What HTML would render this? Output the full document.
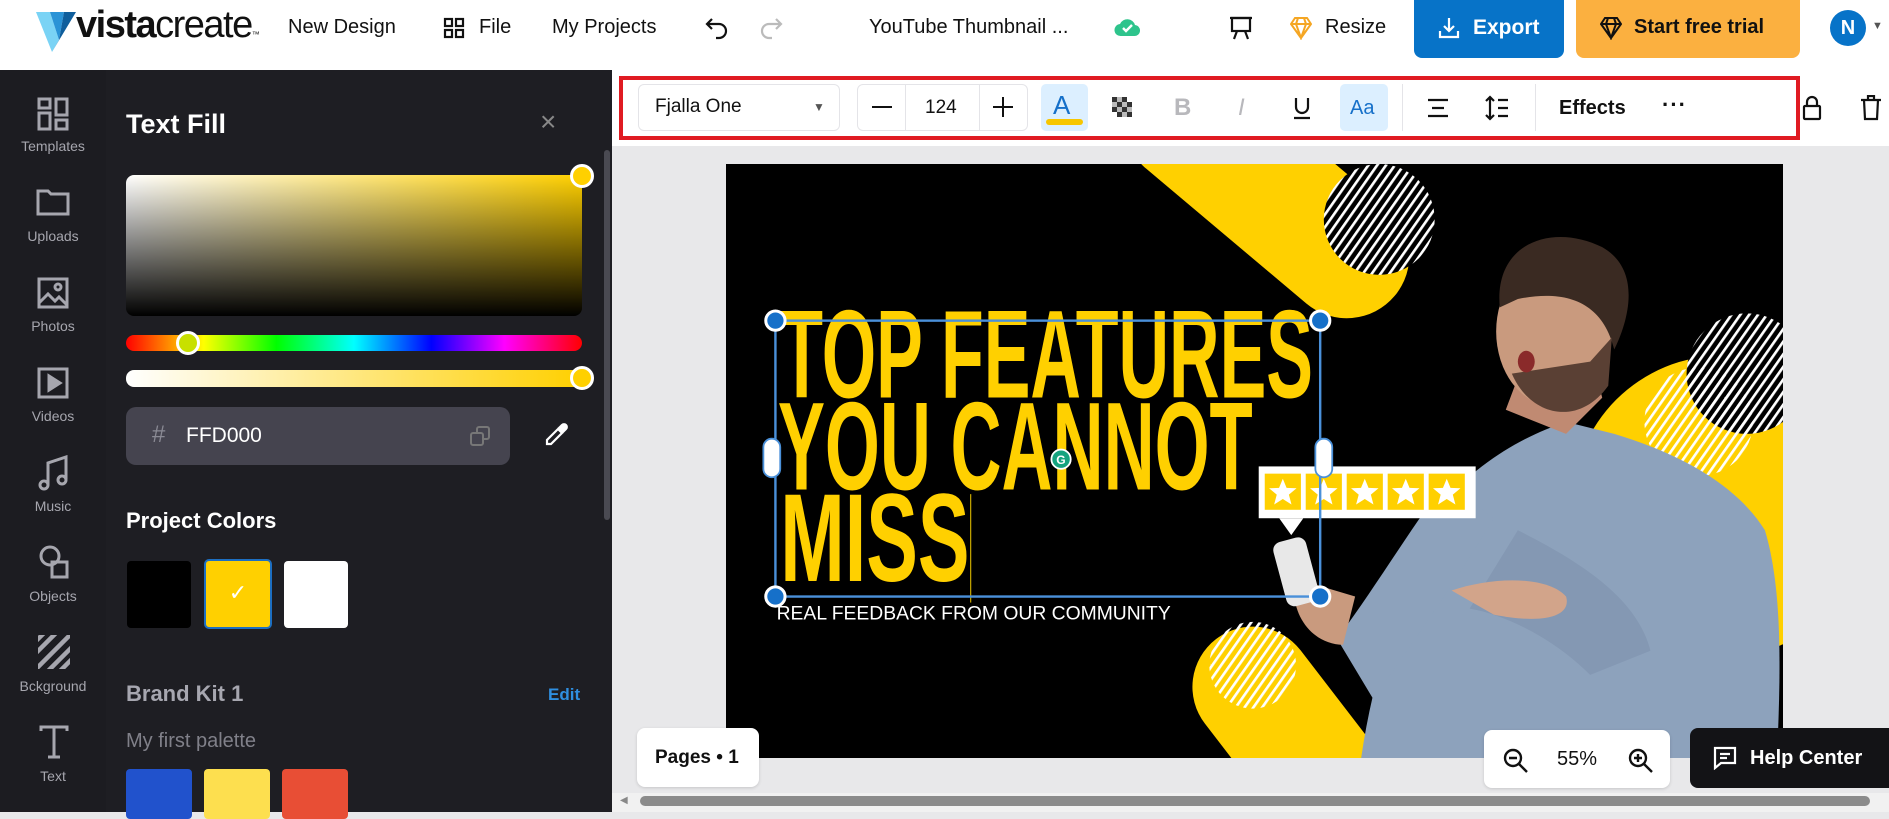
<!DOCTYPE html>
<html><head><meta charset="utf-8"><style>
*{margin:0;padding:0;box-sizing:border-box}
body{width:1889px;height:812px;overflow:hidden;background:#e8e8ea;font-family:"Liberation Sans",sans-serif;position:relative}
.a{position:absolute}
.hdr{left:0;top:0;width:1889px;height:70px;background:#fff}
.nav{font-size:20px;color:#111;top:16px}
.side{left:0;top:70px;width:106px;height:742px;background:#1c1c21}
.panel{left:106px;top:70px;width:506px;height:742px;background:#1e1e23}
.lab{width:106px;text-align:center;color:#a6a6ae;font-size:14px}
.tb{left:612px;top:70px;width:1277px;height:76px;background:#fff}
.btn{border:1px solid #e4e4e8;border-radius:6px;background:#fff}
</style></head><body>
<div class="a hdr"></div>
<svg class="a" style="left:36px;top:10px" width="46" height="44" viewBox="0 0 46 44"><polygon points="0,2 14,2 23,30 16,42" fill="#7ad3f5"/><polygon points="14,2 28,2 23,30" fill="#2a93d6"/><polygon points="28,2 40,2 16,42 23,30" fill="#0f5e9c"/></svg>
<div class="a" style="left:76px;top:4px;font-size:38px;color:#111;letter-spacing:-1.5px"><b>vista</b>create<span style="font-size:8px">™</span></div>
<div class="a nav" style="left:288px">New Design</div>
<svg class="a" style="left:443px;top:17px" width="22" height="22" viewBox="0 0 22 22" fill="none" stroke="#111" stroke-width="2.2"><rect x="2" y="2" width="7" height="7"/><rect x="13" y="2" width="7" height="7"/><rect x="2" y="13" width="7" height="7"/><rect x="13" y="13" width="7" height="7"/></svg>
<div class="a nav" style="left:479px">File</div>
<div class="a nav" style="left:552px">My Projects</div>
<svg class="a" style="left:704px;top:16px" width="26" height="24" viewBox="0 0 26 24" fill="none" stroke="#111" stroke-width="2.2"><path d="M8 3L3 8l5 5M3 8h12a7 7 0 010 14h-3"/></svg>
<svg class="a" style="left:758px;top:16px" width="26" height="24" viewBox="0 0 26 24" fill="none" stroke="#bbb" stroke-width="2.2"><path d="M18 3l5 5-5 5M23 8H11a7 7 0 000 14h3"/></svg>
<div class="a nav" style="left:869px">YouTube Thumbnail ...</div>
<svg class="a" style="left:1114px;top:16px" width="26" height="22" viewBox="0 0 26 22"><path d="M7 20a6 6 0 01-1-12 8 8 0 0115 1 5.5 5.5 0 01-1 11z" fill="#2ec48c"/><path d="M9 12l3 3 6-6" stroke="#fff" stroke-width="2.4" fill="none"/></svg>
<svg class="a" style="left:1229px;top:15px" width="24" height="26" viewBox="0 0 24 26" fill="none" stroke="#111" stroke-width="2.2"><rect x="3" y="3" width="18" height="13"/><path d="M1 3h22M8 16l-3 8M16 16l3 8"/></svg>
<svg class="a" style="left:1290px;top:16px" width="22" height="24" viewBox="0 0 22 24" fill="none" stroke="#f5a623" stroke-width="2"><path d="M5 2h12l4 6-10 14L1 8z M1 8h20 M8 2l-2 6 5 14 5-14-2-6"/></svg>
<div class="a nav" style="left:1325px">Resize</div>
<div class="a" style="left:1414px;top:0;width:150px;height:58px;background:#0773c8;border-radius:0 0 8px 8px"></div>
<svg class="a" style="left:1437px;top:16px" width="24" height="24" viewBox="0 0 24 24" fill="none" stroke="#fff" stroke-width="2.2"><path d="M12 2v13M7 10l5 5 5-5M3 15v6h18v-6"/></svg>
<div class="a" style="left:1473px;top:16px;font-size:21px;color:#fff;font-weight:bold">Export</div>
<div class="a" style="left:1576px;top:0;width:224px;height:58px;background:#fbb040;border-radius:0 0 8px 8px"></div>
<svg class="a" style="left:1600px;top:16px" width="22" height="24" viewBox="0 0 22 24" fill="none" stroke="#111" stroke-width="2"><path d="M5 2h12l4 6-10 14L1 8z M1 8h20 M8 2l-2 6 5 14 5-14-2-6"/></svg>
<div class="a" style="left:1634px;top:16px;font-size:20px;color:#111;font-weight:bold">Start free trial</div>
<div class="a" style="left:1830px;top:10px;width:36px;height:36px;border-radius:50%;background:#0773c8;color:#fff;font-size:20px;font-weight:bold;text-align:center;line-height:36px">N</div>
<div class="a" style="left:1872px;top:20px;font-size:11px;color:#555">▼</div>

<div class="a side"></div>
<svg class="a" style="left:36px;top:96px" width="34" height="36" viewBox="0 0 34 36" fill="none" stroke="#a6a6ae" stroke-width="3"><rect x="3" y="3" width="11" height="9"/><rect x="3" y="17" width="11" height="16"/><rect x="20" y="3" width="11" height="16"/><rect x="20" y="24" width="11" height="9"/></svg>
<div class="a lab" style="top:138px">Templates</div>
<svg class="a" style="left:36px;top:187px" width="34" height="30" viewBox="0 0 34 30" fill="none" stroke="#a6a6ae" stroke-width="3"><path d="M2 4h10l3 3h17v20H2z"/></svg>
<div class="a lab" style="top:228px">Uploads</div>
<svg class="a" style="left:37px;top:277px" width="32" height="32" viewBox="0 0 32 32" fill="none" stroke="#a6a6ae" stroke-width="3"><rect x="2" y="2" width="28" height="28"/><path d="M2 26l9-9 7 7 4-4 8 8"/><circle cx="21" cy="10" r="3"/></svg>
<div class="a lab" style="top:318px">Photos</div>
<svg class="a" style="left:37px;top:367px" width="32" height="32" viewBox="0 0 32 32" fill="none" stroke="#a6a6ae" stroke-width="3"><rect x="2" y="2" width="28" height="28"/><path d="M12 9v14l11-7z" fill="#a6a6ae"/></svg>
<div class="a lab" style="top:408px">Videos</div>
<svg class="a" style="left:38px;top:455px" width="32" height="36" viewBox="0 0 32 36" fill="none" stroke="#a6a6ae" stroke-width="3"><path d="M10 30V8l18-6v22"/><circle cx="6" cy="30" r="4"/><circle cx="24" cy="25" r="4"/></svg>
<div class="a lab" style="top:498px">Music</div>
<svg class="a" style="left:38px;top:545px" width="32" height="34" viewBox="0 0 32 34" fill="none" stroke="#a6a6ae" stroke-width="3"><circle cx="12" cy="11" r="9"/><path d="M14 17h15v15H14z"/></svg>
<div class="a lab" style="top:588px">Objects</div>
<svg class="a" style="left:38px;top:635px" width="32" height="34" viewBox="0 0 32 34"><defs><clipPath id="c1"><rect width="32" height="34"/></clipPath></defs><g clip-path="url(#c1)" stroke="#a6a6ae" stroke-width="4.5"><path d="M-10 14L14-10M-10 26L26-10M-6 38L38-6M6 40L40 6M18 40L40 18M30 40L40 30"/></g></svg>
<div class="a lab" style="top:678px">Bckground</div>
<svg class="a" style="left:39px;top:725px" width="30" height="34" viewBox="0 0 30 34" fill="none" stroke="#a6a6ae" stroke-width="3"><path d="M2 6V2h26v4M15 2v30M9 32h12"/></svg>
<div class="a lab" style="top:768px">Text</div>

<div class="a panel"></div>
<div class="a" style="left:126px;top:109px;font-size:27px;font-weight:bold;color:#fff">Text Fill</div>
<div class="a" style="left:540px;top:106px;font-size:28px;color:#888">×</div>
<div class="a" style="left:126px;top:175px;width:456px;height:141px;border-radius:8px;background:linear-gradient(to top,#000,rgba(0,0,0,0)),linear-gradient(to right,#fff,#ffd000)"></div>
<div class="a" style="left:570px;top:164px;width:24px;height:24px;border-radius:50%;background:#ffd000;border:3px solid #fff"></div>
<div class="a" style="left:126px;top:335px;width:456px;height:16px;border-radius:8px;background:linear-gradient(to right,#f00,#ff0 17%,#0f0 33%,#0ff 50%,#00f 67%,#f0f 83%,#f00)"></div>
<div class="a" style="left:176px;top:331px;width:24px;height:24px;border-radius:50%;background:#c8e000;border:3px solid #fff"></div>
<div class="a" style="left:126px;top:370px;width:456px;height:17px;border-radius:8px;background:linear-gradient(to right,#fff,#ffd000)"></div>
<div class="a" style="left:570px;top:366px;width:24px;height:24px;border-radius:50%;background:#ffd000;border:3px solid #fff"></div>
<div class="a" style="left:604px;top:150px;width:6px;height:370px;border-radius:3px;background:#4a4a52"></div>
<div class="a" style="left:126px;top:407px;width:384px;height:58px;border-radius:10px;background:#45444f"></div>
<div class="a" style="left:152px;top:421px;font-size:24px;color:#8a8a94">#</div>
<div class="a" style="left:186px;top:424px;font-size:21px;color:#fff">FFD000</div>
<svg class="a" style="left:470px;top:426px" width="20" height="20" viewBox="0 0 20 20" fill="none" stroke="#777" stroke-width="2"><rect x="1" y="7" width="12" height="12" rx="2"/><path d="M7 7V3a2 2 0 012-2h8a2 2 0 012 2v8a2 2 0 01-2 2h-4"/></svg>
<svg class="a" style="left:544px;top:423px" width="24" height="26" viewBox="0 0 24 26" fill="none" stroke="#fff" stroke-width="2.2"><path d="M16 3l5 5M14 6l4 4L7 21H3v-4z"/><path d="M18 2a2.5 2.5 0 014 4l-3 3-4-4z" fill="#fff"/></svg>
<div class="a" style="left:126px;top:508px;font-size:22px;font-weight:bold;color:#fff">Project Colors</div>
<div class="a" style="left:127px;top:561px;width:64px;height:67px;border-radius:4px;background:#000"></div>
<div class="a" style="left:204px;top:559px;width:68px;height:70px;border-radius:5px;background:#ffd000;border:2px solid #1d6fc2;color:#fff;text-align:center;line-height:64px;font-size:22px">✓</div>
<div class="a" style="left:284px;top:561px;width:64px;height:67px;border-radius:4px;background:#fff"></div>
<div class="a" style="left:126px;top:681px;font-size:22px;font-weight:bold;color:#a7a7b0">Brand Kit 1</div>
<div class="a" style="left:548px;top:685px;font-size:17px;font-weight:bold;color:#2f8fe0">Edit</div>
<div class="a" style="left:126px;top:730px;font-size:20px;color:#808089">My first palette</div>
<div class="a" style="left:126px;top:769px;width:66px;height:50px;border-radius:4px;background:#2152cc"></div>
<div class="a" style="left:204px;top:769px;width:66px;height:50px;border-radius:4px;background:#fddf4f"></div>
<div class="a" style="left:282px;top:769px;width:66px;height:50px;border-radius:4px;background:#e84e35"></div>

<div class="a tb"></div>
<div class="a" style="left:619px;top:76px;width:1181px;height:64px;border:4px solid #e01b22"></div>
<div class="a btn" style="left:638px;top:84px;width:202px;height:47px"></div>
<div class="a" style="left:655px;top:96px;font-size:19px;color:#111">Fjalla One</div>
<div class="a" style="left:813px;top:100px;font-size:12px;color:#555">▼</div>
<div class="a btn" style="left:857px;top:84px;width:171px;height:47px"></div>
<div class="a" style="left:905px;top:84px;width:1px;height:47px;background:#e4e4e8"></div>
<div class="a" style="left:979px;top:84px;width:1px;height:47px;background:#e4e4e8"></div>
<div class="a" style="left:872px;top:106px;width:20px;height:2px;background:#111"></div>
<div class="a" style="left:925px;top:97px;font-size:19px;color:#111">124</div>
<div class="a" style="left:993px;top:106px;width:20px;height:2px;background:#111"></div>
<div class="a" style="left:1002px;top:97px;width:2px;height:20px;background:#111"></div>
<div class="a" style="left:1041px;top:84px;width:47px;height:47px;background:#dcefff;border-radius:5px"></div>
<div class="a" style="left:1053px;top:90px;font-size:26px;color:#1670c9">A</div>
<div class="a" style="left:1046px;top:119px;width:37px;height:6px;border-radius:3px;background:#f7c600"></div>
<svg class="a" style="left:1112px;top:97px" width="22" height="22" viewBox="0 0 22 22"><g fill="#333"><rect x="0" y="0" width="5" height="5"/><rect x="10" y="0" width="5" height="5"/><rect x="5" y="5" width="5" height="5"/><rect x="15" y="5" width="5" height="5"/><rect x="0" y="10" width="5" height="5"/><rect x="10" y="10" width="5" height="5"/><rect x="5" y="15" width="5" height="5"/><rect x="15" y="15" width="5" height="5"/></g><g fill="#bbb"><rect x="5" y="0" width="5" height="5"/><rect x="0" y="5" width="5" height="5"/><rect x="10" y="5" width="5" height="5"/><rect x="5" y="10" width="5" height="5"/><rect x="15" y="10" width="5" height="5"/><rect x="10" y="15" width="5" height="5"/></g></svg>
<div class="a" style="left:1174px;top:94px;font-size:24px;font-weight:bold;color:#b8b8bc">B</div>
<div class="a" style="left:1238px;top:94px;font-size:24px;font-style:italic;color:#b8b8bc">I</div>
<svg class="a" style="left:1292px;top:96px" width="20" height="24" viewBox="0 0 20 24" fill="none" stroke="#111" stroke-width="2.2"><path d="M4 2v9a6 6 0 0012 0V2M2 22h16"/></svg>
<div class="a" style="left:1340px;top:84px;width:48px;height:47px;background:#dcefff;border-radius:5px"></div>
<div class="a" style="left:1350px;top:97px;font-size:20px;color:#1670c9">Aa</div>
<div class="a" style="left:1402px;top:84px;width:1px;height:47px;background:#e4e4e8"></div>
<svg class="a" style="left:1427px;top:98px" width="22" height="20" viewBox="0 0 22 20" stroke="#111" stroke-width="2.2"><path d="M1 2h20M5 10h12M1 18h20"/></svg>
<svg class="a" style="left:1485px;top:95px" width="24" height="26" viewBox="0 0 24 26" fill="none" stroke="#111" stroke-width="2.2"><path d="M5 2v22M1 6l4-4 4 4M1 20l4 4 4-4M13 5h10M13 13h10M13 21h10"/></svg>
<div class="a" style="left:1535px;top:84px;width:1px;height:47px;background:#e4e4e8"></div>
<div class="a" style="left:1559px;top:97px;font-size:20px;font-weight:bold;color:#111">Effects</div>
<div class="a" style="left:1662px;top:92px;font-size:22px;font-weight:bold;color:#111;letter-spacing:1px">···</div>
<svg class="a" style="left:1802px;top:95px" width="20" height="26" viewBox="0 0 20 26" fill="none" stroke="#111" stroke-width="2.2"><rect x="2" y="11" width="16" height="13" rx="1"/><path d="M5 11V7a5 5 0 0110 0v4"/></svg>
<svg class="a" style="left:1860px;top:95px" width="22" height="26" viewBox="0 0 22 26" fill="none" stroke="#111" stroke-width="2.2"><path d="M1 5h20M8 5V1h6v4M4 5l1 19h12l1-19"/></svg>

<svg class="a" style="left:726px;top:164px" width="1057" height="594" viewBox="603 136 877 493" preserveAspectRatio="none">
<defs>
<clipPath id="cv"><rect x="603" y="136" width="877" height="493"/></clipPath>
<pattern id="st" width="6" height="6" patternUnits="userSpaceOnUse" patternTransform="rotate(35)"><rect width="2.2" height="6" fill="#fff"/></pattern>
<pattern id="st2" width="6" height="6" patternUnits="userSpaceOnUse" patternTransform="rotate(35)"><rect width="6" height="6" fill="#000"/><rect width="2.2" height="6" fill="#fff"/></pattern>
<symbol id="star" viewBox="0 0 20 20"><polygon points="10,1 12.6,7.3 19.5,7.6 14.2,12 16,18.8 10,15 4,18.8 5.8,12 0.5,7.6 7.4,7.3" fill="#fff"/></symbol>
</defs>
<g clip-path="url(#cv)">
<rect x="603" y="136" width="877" height="493" fill="#000"/>
<line x1="985" y1="100" x2="1118" y2="212" stroke="#ffd000" stroke-width="104" stroke-linecap="round"/>
<circle cx="1145" cy="182" r="46" fill="url(#st2)"/>
<circle cx="1430" cy="420" r="125" fill="#ffd000"/>
<circle cx="1450" cy="310" r="50" fill="url(#st2)"/>
<circle cx="1410" cy="350" r="45" fill="url(#st)"/>
<line x1="1040" y1="570" x2="1140" y2="700" stroke="#ffd000" stroke-width="100" stroke-linecap="round"/>
<circle cx="1040" cy="552" r="36" fill="url(#st)"/>
<path d="M1130 629 C1140 560 1160 500 1195 420 C1230 380 1270 360 1300 350 L1340 360 C1390 375 1440 400 1465 440 C1480 490 1478 560 1475 629 Z" fill="#8da2bc"/>
<path d="M1200 400 C1170 440 1140 490 1110 530 L1140 580 C1175 530 1210 480 1240 430 Z" fill="#8da2bc"/>
<path d="M1260 440 C1320 470 1360 500 1370 540 L1320 560 C1290 530 1250 510 1220 505 Z" fill="#8498b3"/>
<path d="M1205 490 C1240 478 1285 478 1300 495 C1305 512 1280 518 1240 510 Z" fill="#d2a48a"/>
<path d="M1250 340 L1300 360 L1330 330 L1320 290 L1265 300 Z" fill="#c08a72"/>
<ellipse cx="1290" cy="275" rx="48" ry="62" fill="#c99a7e"/>
<path d="M1245 255 C1240 200 1290 185 1330 205 C1365 225 1350 270 1340 290 C1330 250 1300 240 1260 248 Z" fill="#3a2a22"/>
<path d="M1255 310 C1270 345 1310 355 1335 320 L1338 280 L1320 300 Z" fill="#5a4034"/>
<ellipse cx="1267" cy="300" rx="7" ry="9" fill="#8a2a2a"/>
<path d="M1075 480 C1070 510 1090 535 1115 535 L1125 495 Z" fill="#c99a7e"/>
<rect x="1062" y="447" width="28" height="55" rx="7" fill="#e8e8e8" transform="rotate(-15 1076 474)"/>
<rect x="1045" y="387" width="180" height="43" fill="#fff"/>
<polygon points="1062,430 1082,430 1072,444" fill="#fff"/>
<g fill="#ffd000"><rect x="1050" y="393" width="30" height="30"/><rect x="1084" y="393" width="30" height="30"/><rect x="1118" y="393" width="30" height="30"/><rect x="1152" y="393" width="30" height="30"/><rect x="1186" y="393" width="30" height="30"/></g>
<use href="#star" x="1053" y="396" width="24" height="24"/><use href="#star" x="1087" y="396" width="24" height="24"/><use href="#star" x="1121" y="396" width="24" height="24"/><use href="#star" x="1155" y="396" width="24" height="24"/><use href="#star" x="1189" y="396" width="24" height="24"/>
<g fill="#ffd000" font-family="Liberation Sans Narrow, Liberation Sans, sans-serif" font-weight="bold">
<text x="648" y="330" font-size="104" textLength="442" lengthAdjust="spacingAndGlyphs">TOP FEATURES</text>
<text x="646" y="406" font-size="104" textLength="394" lengthAdjust="spacingAndGlyphs">YOU CANNOT</text>
<text x="648" y="482" font-size="104" textLength="157" lengthAdjust="spacingAndGlyphs">MISS</text>
</g>
<line x1="806" y1="410" x2="806" y2="500" stroke="#c9a800" stroke-width="1"/>
<text x="645" y="514" fill="#fff" font-family="Liberation Sans, sans-serif" font-size="16" textLength="327" lengthAdjust="spacingAndGlyphs">REAL FEEDBACK FROM OUR COMMUNITY</text>
<rect x="644" y="266" width="452" height="229" fill="none" stroke="#4a90d9" stroke-width="2"/>
<g fill="#1670c9" stroke="#fff" stroke-width="2.5"><circle cx="644" cy="266" r="8"/><circle cx="1096" cy="266" r="8"/><circle cx="644" cy="495" r="8"/><circle cx="1096" cy="495" r="8"/></g>
<g fill="#fff" stroke="#4a90d9" stroke-width="1.5"><rect x="634" y="364" width="14" height="32" rx="7"/><rect x="1092" y="364" width="14" height="32" rx="7"/></g>
<circle cx="881" cy="381" r="8" fill="#15a37f" stroke="#fff" stroke-width="1.5"/>
<text x="877" y="385" fill="#fff" font-size="10" font-family="Liberation Sans, sans-serif" font-weight="bold">G</text>
</g>
</svg>

<div class="a" style="left:637px;top:728px;width:122px;height:59px;background:#fff;border-radius:8px;box-shadow:0 1px 3px rgba(0,0,0,.15)"></div>
<div class="a" style="left:655px;top:747px;font-size:19px;font-weight:bold;color:#111">Pages • 1</div>
<div class="a" style="left:1484px;top:730px;width:186px;height:58px;background:#fff;border-radius:8px;box-shadow:0 1px 3px rgba(0,0,0,.15)"></div>
<svg class="a" style="left:1503px;top:748px" width="26" height="26" viewBox="0 0 26 26" fill="none" stroke="#111" stroke-width="2.4"><circle cx="10" cy="10" r="8"/><path d="M16 16l8 8M6 10h8"/></svg>
<div class="a" style="left:1557px;top:748px;font-size:20px;color:#111">55%</div>
<svg class="a" style="left:1628px;top:748px" width="26" height="26" viewBox="0 0 26 26" fill="none" stroke="#111" stroke-width="2.4"><circle cx="10" cy="10" r="8"/><path d="M16 16l8 8M6 10h8M10 6v8"/></svg>
<div class="a" style="left:1690px;top:728px;width:210px;height:60px;background:#131316;border-radius:8px"></div>
<svg class="a" style="left:1713px;top:746px" width="24" height="24" viewBox="0 0 24 24" fill="none" stroke="#fff" stroke-width="2.2"><path d="M2 2h20v15H8l-6 5z M7 8h10M7 12h7"/></svg>
<div class="a" style="left:1750px;top:747px;font-size:20px;font-weight:bold;color:#fff">Help Center</div>
<div class="a" style="left:612px;top:793px;width:1277px;height:19px;background:#f1f1f1"></div>
<div class="a" style="left:620px;top:795px;font-size:10px;color:#888">◀</div>
<div class="a" style="left:640px;top:796px;width:1230px;height:10px;border-radius:5px;background:#8b8b8b"></div>
</body></html>
